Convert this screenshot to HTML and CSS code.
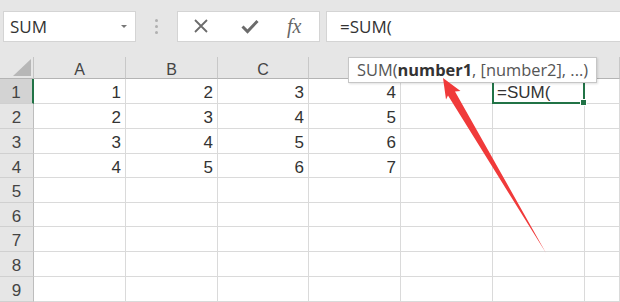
FILE: index.html
```html
<!DOCTYPE html>
<html lang="en">
<head>
    <meta charset="UTF-8">
    <meta name="viewport" content="width=device-width, initial-scale=1.0">
    <title>SUM</title>
    <link rel="stylesheet" href="styles.css">
</head>
<body>

    <div class="toolbar">
        <div class="name-box">
            <span>SUM</span>
            <span class="caret"></span>
        </div>
        <div class="grip">
            <i></i><i></i><i></i>
        </div>
        <div class="fx-buttons">
            <svg class="btn-icon" width="16" height="16" viewBox="0 0 16 16">
                <path d="M2 2 L14 14 M14 2 L2 14" stroke="#6b6b6b" stroke-width="1.8" fill="none"/>
            </svg>
            <svg class="btn-icon" width="18" height="16" viewBox="0 0 18 16">
                <path d="M1.5 8.5 L6.5 13.5 L16.5 3" stroke="#6b6b6b" stroke-width="3" fill="none"/>
            </svg>
            <span class="fx">fx</span>
        </div>
        <div class="formula-input">=SUM(</div>
    </div>

    <div class="sheet" id="sheet"></div>

    <div class="tip">SUM(<b>number1</b>, [number2], ...)</div>

    <svg class="arrow" width="620" height="302" viewBox="0 0 620 302">
        <polygon points="443,78 460.5,91 455,91.5 546,253 448,95.5 446,99.5" fill="#f03a3a"/>
    </svg>

    <script>
        document.addEventListener('DOMContentLoaded', function() {
            const sheet = document.getElementById('sheet');
            // D, E, F sit under the tooltip and G's letter is off screen
            const cols = ['A', 'B', 'C', '', '', '', ''];
            const data = [
                [1, 2, 3, 4],
                [2, 3, 4, 5],
                [3, 4, 5, 6],
                [4, 5, 6, 7]
            ];

            const corner = document.createElement('div');
            corner.classList.add('corner');
            sheet.appendChild(corner);

            cols.forEach(function(c, i) {
                const head = document.createElement('div');
                head.classList.add('col-head');
                if (i === 5) head.classList.add('active');
                head.textContent = c;
                sheet.appendChild(head);
            });

            for (let r = 1; r <= 9; r++) {
                const rowHead = document.createElement('div');
                rowHead.classList.add('row-head');
                if (r === 1) rowHead.classList.add('active');
                rowHead.textContent = r;
                sheet.appendChild(rowHead);

                cols.forEach(function(c, i) {
                    const cell = document.createElement('div');
                    cell.classList.add('cell');
                    if (data[r - 1] && data[r - 1][i] !== undefined) {
                        cell.textContent = data[r - 1][i];
                    }
                    if (r === 1 && i === 5) {
                        cell.classList.add('selected');
                        cell.textContent = '=SUM(';
                    }
                    sheet.appendChild(cell);
                });
            }
        });
    </script>

</body>
</html>
```

FILE: styles.css
```css
body {
    margin: 0;
    width: 620px;
    height: 302px;
    overflow: hidden;
    background: #e6e6e6;
    font-family: "Open Sans", "Liberation Sans", sans-serif;
    position: relative;
}

.toolbar {
    display: flex;
    align-items: center;
    height: 57px;
    padding-bottom: 5px;
    box-sizing: border-box;
    padding-left: 3px;
}

.name-box,
.fx-buttons,
.formula-input {
    height: 31px;
    box-sizing: border-box;
    background: #fff;
    border: 1px solid #d4d4d4;
    display: flex;
    align-items: center;
}

.name-box {
    width: 133px;
    padding: 0 8px 0 6px;
    justify-content: space-between;
    font-size: 17px;
    color: #333;
}

.caret {
    width: 0;
    height: 0;
    border-left: 3px solid transparent;
    border-right: 3px solid transparent;
    border-top: 3px solid #777;
}

.grip {
    width: 41px;
    display: flex;
    flex-direction: column;
    align-items: center;
    gap: 3px;
}

.grip i {
    width: 3px;
    height: 3px;
    border-radius: 50%;
    background: #b0b0b0;
}

.fx-buttons {
    width: 143px;
    padding-left: 15px;
    gap: 32px;
}

.fx {
    font-family: "Liberation Serif", serif;
    font-style: italic;
    font-size: 20px;
    color: #666;
    margin-left: -4px;
}

.formula-input {
    flex-grow: 1;
    margin-left: 6px;
    border-right: none;
    padding-left: 13px;
    font-size: 17px;
    color: #333;
}

.sheet {
    display: grid;
    grid-template-columns: 34px 92px 92px 91px 92px 92px 92px 35px;
    grid-template-rows: 22px 25px 25px 25px 24px 25px 24px 25px 25px 25px;
    background: #fff;
}

.corner {
    background: #e6e6e6;
    border-right: 1px solid #c4c4c4;
    border-bottom: 1px solid #b4b4b4;
    position: relative;
}

.corner::after {
    content: "";
    position: absolute;
    right: 2px;
    bottom: 2px;
    width: 0;
    height: 0;
    border-left: 18px solid transparent;
    border-bottom: 17px solid #b7b7b7;
}

.col-head {
    background: #e6e6e6;
    border-right: 1px solid #c8c8c8;
    border-bottom: 1px solid #b4b4b4;
    box-sizing: border-box;
    text-align: center;
    font-family: "Liberation Sans", sans-serif;
    font-size: 16px;
    line-height: 26px;
    overflow: hidden;
    color: #444;
}

.col-head.active {
    background: #d2d2d2;
    border-bottom: 2px solid #217346;
}

.row-head {
    background: #e6e6e6;
    border-right: 1px solid #bdbdbd;
    border-bottom: 1px solid #d0d0d0;
    box-sizing: border-box;
    text-align: center;
    font-family: "Liberation Sans", sans-serif;
    font-size: 17px;
    line-height: 27px;
    overflow: hidden;
    color: #444;
}

.row-head.active {
    background: #d3d3d3;
    border-right: 2px solid #217346;
}

.cell {
    border-right: 1px solid #dadada;
    border-bottom: 1px solid #dadada;
    box-sizing: border-box;
    text-align: right;
    padding-right: 4px;
    font-family: "Liberation Sans", sans-serif;
    font-size: 17px;
    line-height: 27px;
    color: #333;
}

.cell.selected {
    text-align: left;
    padding-left: 4px;
    position: relative;
}

.cell.selected::before {
    content: "";
    position: absolute;
    left: -1px;
    top: -1px;
    right: -1px;
    bottom: -1px;
    border: 2px solid #217346;
}

.cell.selected::after {
    content: "";
    position: absolute;
    right: -3px;
    bottom: -3px;
    width: 5px;
    height: 5px;
    background: #217346;
    border: 1px solid #fff;
}

.tip {
    position: absolute;
    left: 348px;
    top: 57px;
    width: 249px;
    height: 26px;
    box-sizing: border-box;
    background: #fff;
    border: 1px solid #c6c6c6;
    box-shadow: 1px 1px 2px rgba(0, 0, 0, 0.12);
    padding-left: 8px;
    font-size: 16.4px;
    line-height: 24px;
    color: #555;
    white-space: nowrap;
}

.tip b {
    color: #333;
}

.arrow {
    position: absolute;
    left: 0;
    top: 0;
}
```
